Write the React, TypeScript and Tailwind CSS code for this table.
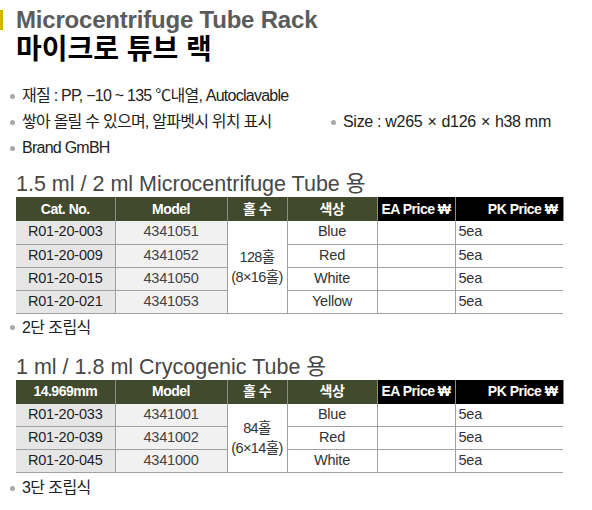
import React from "react";

const sans = "font-['Liberation_Sans','Noto_Sans_CJK_KR',sans-serif]";

type Row = { cat: string; model: string; color: string };

const rack1: Row[] = [
  { cat: "R01-20-003", model: "4341051", color: "Blue" },
  { cat: "R01-20-009", model: "4341052", color: "Red" },
  { cat: "R01-20-015", model: "4341050", color: "White" },
  { cat: "R01-20-021", model: "4341053", color: "Yellow" },
];

const rack2: Row[] = [
  { cat: "R01-20-033", model: "4341001", color: "Blue" },
  { cat: "R01-20-039", model: "4341002", color: "Red" },
  { cat: "R01-20-045", model: "4341000", color: "White" },
];

function Bullet({ children }: { children: React.ReactNode }) {
  return (
    <span className="flex items-center">
      <span className="w-[5px] h-[5px] rounded-full bg-[#a8a8a8] mr-[7px]" />
      <span>{children}</span>
    </span>
  );
}

function PriceTable({
  first,
  rows,
  holes,
  layout,
}: {
  first: string;
  rows: Row[];
  holes: string;
  layout: string;
}) {
  const th = "h-[24px] p-0 text-white text-[14px] font-bold tracking-[-0.5px] border-r border-[#8c8c8c]";
  return (
    <table className="table-fixed border-collapse ml-[16px] w-[547px]">
      <colgroup>
        <col className="w-[99px]" />
        <col className="w-[112px]" />
        <col className="w-[60px]" />
        <col className="w-[90px]" />
        <col className="w-[78px]" />
        <col className="w-[108px]" />
      </colgroup>
      <thead>
        <tr>
          <th className={`${th} bg-[#414a2d] text-center`}>{first}</th>
          <th className={`${th} bg-[#414a2d] text-center`}>Model</th>
          <th className={`${th} bg-[#414a2d] text-center`}>홀 수</th>
          <th className={`${th} bg-[#414a2d] text-center`}>색상</th>
          <th className={`${th} bg-black text-center`}>EA Price ₩</th>
          <th className={`${th} bg-black text-right pr-[5px]`}>PK Price ₩</th>
        </tr>
      </thead>
      <tbody className="text-[14.5px] text-[#333] tracking-[-0.2px]">
        {rows.map((r, i) => (
          <tr key={r.cat} className="h-[23px] border-b border-[#a0a0a0]">
            <td className="p-0 bg-[#e6e6e6] text-[#1e1e1e] text-center border-r border-[#a0a0a0]">{r.cat}</td>
            <td className="p-0 bg-[#f1f1f1] text-[#444] text-center border-r border-[#a0a0a0]">{r.model}</td>
            {i === 0 && (
              <td
                rowSpan={rows.length}
                className="p-0 text-center leading-[20px] tracking-[-0.6px] border-r border-b border-[#a0a0a0]"
              >
                {holes}
                <br />
                {layout}
              </td>
            )}
            <td className="p-0 text-center border-r border-[#a0a0a0]">{r.color}</td>
            <td className="p-0 border-r border-[#a0a0a0]" />
            <td className="p-0 pl-[3px]">5ea</td>
          </tr>
        ))}
      </tbody>
    </table>
  );
}

export default function App() {
  return (
    <div className={`w-[592px] h-[510px] bg-white overflow-hidden ${sans}`}>
      {/* title */}
      <div className="flex items-center h-[28px] mt-[6px]">
        <div className="w-[3px] h-[20px] bg-[#d2b300]" />
        <h1 className="ml-[13px] text-[24px] font-bold leading-none text-[#5b5b5b] tracking-[-0.2px]">
          Microcentrifuge Tube Rack
        </h1>
      </div>
      <h2 className="h-[32px] pl-[16px] flex items-center text-[28px] font-bold text-black leading-none">
        마이크로 튜브 랙
      </h2>

      {/* specs */}
      <div className="mt-[17px] pl-[10px] text-[16px] text-[#222] tracking-[-0.75px]">
        <div className="h-[26px] flex items-center">
          <Bullet>재질 : PP, −10 ~ 135 ℃내열, Autoclavable</Bullet>
        </div>
        <div className="h-[26px] flex items-center">
          <div className="w-[321px]">
            <Bullet>쌓아 올릴 수 있으며, 알파벳시 위치 표시</Bullet>
          </div>
          <span className="tracking-[-0.3px]">
            <Bullet>
              Size : w265<span className="mx-[5px]">×</span>d126<span className="mx-[5px]">×</span>h38 mm
            </Bullet>
          </span>
        </div>
        <div className="h-[26px] flex items-center">
          <Bullet>Brand GmBH</Bullet>
        </div>
      </div>

      {/* section 1 */}
      <div className="h-[24px] mt-[11px] pl-[16px] flex items-center text-[21.5px] text-[#474747]">
        1.5 ml / 2 ml Microcentrifuge Tube 용
      </div>
      <div className="mt-[1px]">
        <PriceTable first="Cat. No." rows={rack1} holes="128홀" layout="(8×16홀)" />
      </div>
      <div className="h-[28px] pl-[10px] flex items-center text-[16px] text-[#222] tracking-[-0.6px]">
        <Bullet>2단 조립식</Bullet>
      </div>

      {/* section 2 */}
      <div className="h-[24px] mt-[14px] pl-[16px] flex items-center text-[21.5px] text-[#474747]">
        1 ml / 1.8 ml Crycogenic Tube 용
      </div>
      <div>
        <PriceTable first="14.969mm" rows={rack2} holes="84홀" layout="(6×14홀)" />
      </div>
      <div className="h-[30px] pl-[10px] flex items-center text-[16px] text-[#222] tracking-[-0.6px]">
        <Bullet>3단 조립식</Bullet>
      </div>
    </div>
  );
}
